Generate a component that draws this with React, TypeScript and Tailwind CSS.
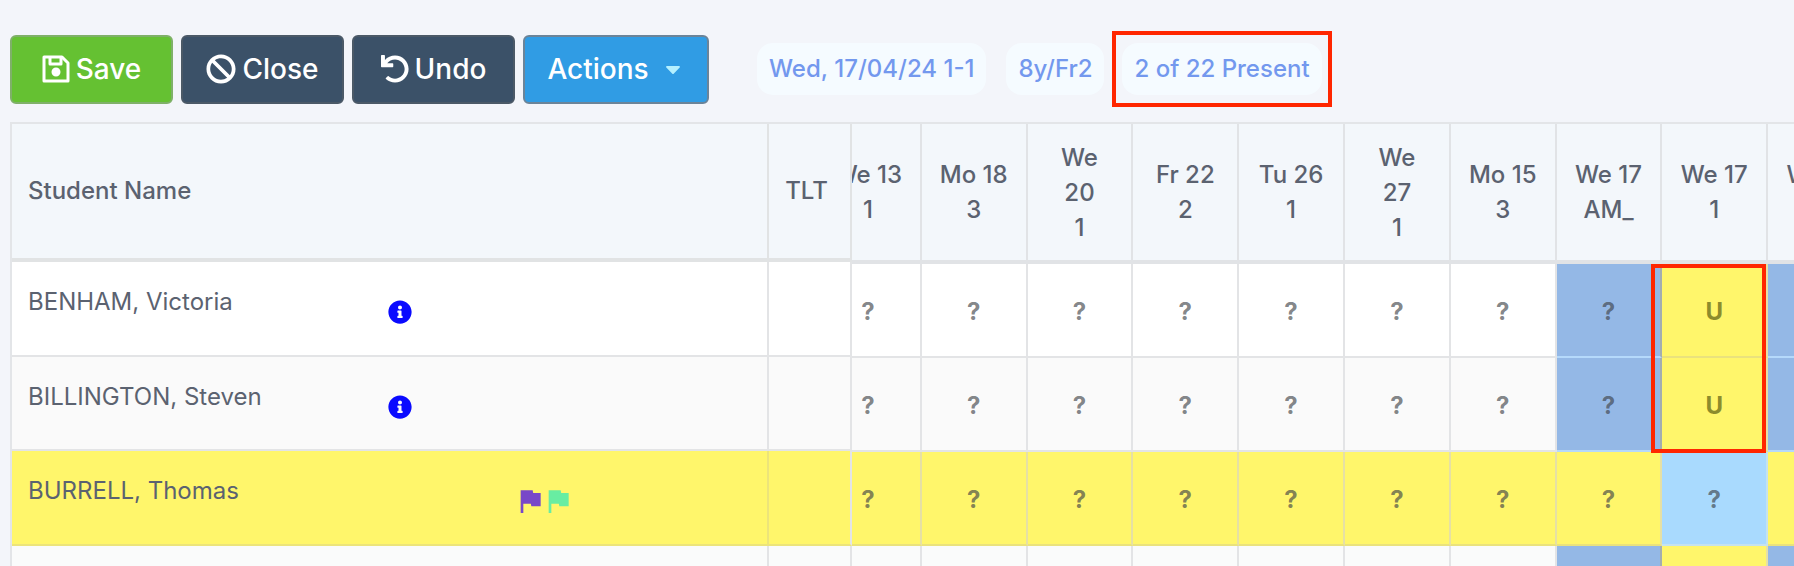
import type { ReactNode } from 'react';
import { FaBan, FaCaretDown, FaInfoCircle, FaUndo } from 'react-icons/fa';
import { MdFlag } from 'react-icons/md';

type Tone = 'none' | 'blue' | 'yellow' | 'sky';

interface Mark {
  code: string;
  tone: Tone;
}

interface Student {
  name: string;
  info?: boolean;
  flags?: boolean;
  row: string;
  marks: Mark[];
}

const sessions = [
  ['We 13', '1'],
  ['Mo 18', '3'],
  ['We', '20', '1'],
  ['Fr 22', '2'],
  ['Tu 26', '1'],
  ['We', '27', '1'],
  ['Mo 15', '3'],
  ['We 17', 'AM_'],
  ['We 17', '1'],
  ['We 17', '2'],
];

const tones: Record<Tone, string> = {
  none: 'border-[#e3e4e6]',
  blue: 'bg-[#94b8e6] border-b-[#b5d9fb] border-r-[#a3adb0]',
  yellow: 'bg-[#fff66b] border-r-[#e6e0a4] border-b-[#eae27c]',
  sky: 'bg-[#a9dafe] border-[#c5e2ee]',
};

function buildMarks(base: Tone, tail: Mark[], code = '?'): Mark[] {
  return [...Array.from({ length: 7 }, () => ({ code, tone: base })), ...tail];
}

const students: Student[] = [
  {
    name: 'BENHAM, Victoria',
    info: true,
    row: 'bg-white',
    marks: buildMarks('none', [
      { code: '?', tone: 'blue' },
      { code: 'U', tone: 'yellow' },
      { code: '?', tone: 'blue' },
    ]),
  },
  {
    name: 'BILLINGTON, Steven',
    info: true,
    row: 'bg-[#fafafa]',
    marks: buildMarks('none', [
      { code: '?', tone: 'blue' },
      { code: 'U', tone: 'yellow' },
      { code: '?', tone: 'blue' },
    ]),
  },
  {
    name: 'BURRELL, Thomas',
    flags: true,
    row: 'bg-[#fff66b]',
    marks: buildMarks('yellow', [
      { code: '?', tone: 'yellow' },
      { code: '?', tone: 'sky' },
      { code: '?', tone: 'yellow' },
    ]),
  },
  {
    name: '',
    row: 'bg-[#fafbfb]',
    marks: buildMarks(
      'none',
      [
        { code: '', tone: 'blue' },
        { code: '', tone: 'yellow' },
        { code: '', tone: 'blue' },
      ],
      '',
    ),
  },
];

function SaveIcon() {
  return (
    <svg viewBox="0 0 28 28" className="w-7 h-7" fill="none" stroke="currentColor" strokeWidth="3" strokeLinejoin="round">
      <path d="M2 2h18l6 6v18H2z" />
      <path d="M8 3v6h11V3" />
      <circle cx="14" cy="17" r="3" fill="currentColor" />
    </svg>
  );
}

function ToolbarButton({ className, children }: { className: string; children: ReactNode }) {
  return (
    <button
      type="button"
      className={`flex items-center justify-center gap-1.5 h-[69px] rounded-md border-2 text-[28px] leading-8 font-medium text-white ${className}`}
    >
      {children}
    </button>
  );
}

function Pill({ children }: { children: ReactNode }) {
  return <span className="h-13 px-3 flex items-center rounded-2xl bg-[#f5fbff] text-[#7398ee]">{children}</span>;
}

export default function App() {
  return (
    <div className="h-screen overflow-hidden bg-[#f3f5fa] pt-8 pl-[10px] font-['Inter',sans-serif] text-2xl text-[#5b6270]">
      <div className="flex items-center h-[74px]">
        <div className="flex gap-2">
          <ToolbarButton className="w-[163px] bg-[#65c132] border-[#7fb069]">
            <SaveIcon />
            Save
          </ToolbarButton>
          <ToolbarButton className="w-[163px] bg-[#3b5168] border-[#4b5967]">
            <FaBan className="w-[30px] h-[30px]" />
            Close
          </ToolbarButton>
          <ToolbarButton className="w-[163px] bg-[#3b5168] border-[#4b5967]">
            <FaUndo className="w-7 h-7" />
            Undo
          </ToolbarButton>
          <ToolbarButton className="w-[186px] bg-[#309ce4] border-[#6b8499]">
            Actions
            <FaCaretDown className="w-6 h-6 ml-1.5 text-[#b4f0ff]" />
          </ToolbarButton>
        </div>
        <div className="flex items-center ml-12 font-medium whitespace-nowrap">
          <Pill>Wed, 17/04/24 1-1</Pill>
          <div className="pl-5 pr-2">
            <Pill>8y/Fr2</Pill>
          </div>
          <div className="px-1.5 h-[76px] flex items-center border-4 border-[#ff2600]">
            <Pill>2 of 22 Present</Pill>
          </div>
        </div>
      </div>

      <div className="flex mt-4">
        <table className="w-[842px] shrink-0 table-fixed border-separate border-spacing-0 border-t-2 border-l-2 border-[#e3e5e8]">
          <thead>
            <tr className="h-[138px] bg-[#f3f7fb]">
              <th className="pl-4 text-left font-medium border-r-2 border-b-4 border-[#e1e3e4]">Student Name</th>
              <th className="w-[83px] pr-1.5 font-medium border-r-2 border-b-4 border-[#e1e3e4]">TLT</th>
            </tr>
          </thead>
          <tbody>
            {students.map((s, i) => (
              <tr key={i} className={`h-[94px] ${s.row}`}>
                <td className={`pl-4 border-r-2 border-b-2 ${s.flags ? 'border-[#ece47a]' : 'border-[#e3e4e6]'}`}>
                  <div className="grid grid-cols-[360px_1fr] items-center pt-2">
                    <span className="pb-5">{s.name}</span>
                    {s.info && <FaInfoCircle className="w-6 h-6 text-[#0a0aff]" />}
                    {s.flags && (
                      <span className="flex pl-[126px]">
                        <MdFlag className="w-8 h-8 text-[#7848c8]" />
                        <MdFlag className="w-8 h-8 -ml-1 text-[#68eda2]" />
                      </span>
                    )}
                  </div>
                </td>
                <td className={`border-r-2 border-b-2 border-r-[#e3e4e6] ${s.flags ? 'border-b-[#ece47a]' : 'border-b-[#e3e4e6]'}`} />
              </tr>
            ))}
          </tbody>
        </table>

        <div className="flex flex-1 min-w-0 justify-start overflow-hidden">
          <table className="w-[1058px] shrink-0 -ml-9 table-fixed border-separate border-spacing-0 border-t-2 border-[#e3e5e8]">
            <thead>
              <tr className="h-[140px] bg-[#f3f7fb]">
                {sessions.map((lines, i) => (
                  <th key={i} className="font-medium leading-[35px] border-r-2 border-b-4 border-[#e1e3e6]">
                    {lines.map((line, j) => (
                      <div key={j}>{line}</div>
                    ))}
                  </th>
                ))}
              </tr>
            </thead>
            <tbody>
              {students.map((s, i) => (
                <tr key={i} className={`h-[94px] ${s.row}`}>
                  {s.marks.map((m, j) => (
                    <td
                      key={j}
                      className={`relative pt-1 text-center font-bold border-r-2 border-b-2 ${m.code === 'U' ? 'text-[#8c8c2c]' : 'text-[#3c4146]/65'} ${tones[m.tone]}`}
                    >
                      {m.code}
                      {/* outline round the two unexplained marks */}
                      {i === 0 && m.code === 'U' && (
                        <span className="absolute z-10 top-0 -left-[11px] right-0 h-[189px] border-4 border-[#ff2600]" />
                      )}
                    </td>
                  ))}
                </tr>
              ))}
            </tbody>
          </table>
        </div>
      </div>
    </div>
  );
}
